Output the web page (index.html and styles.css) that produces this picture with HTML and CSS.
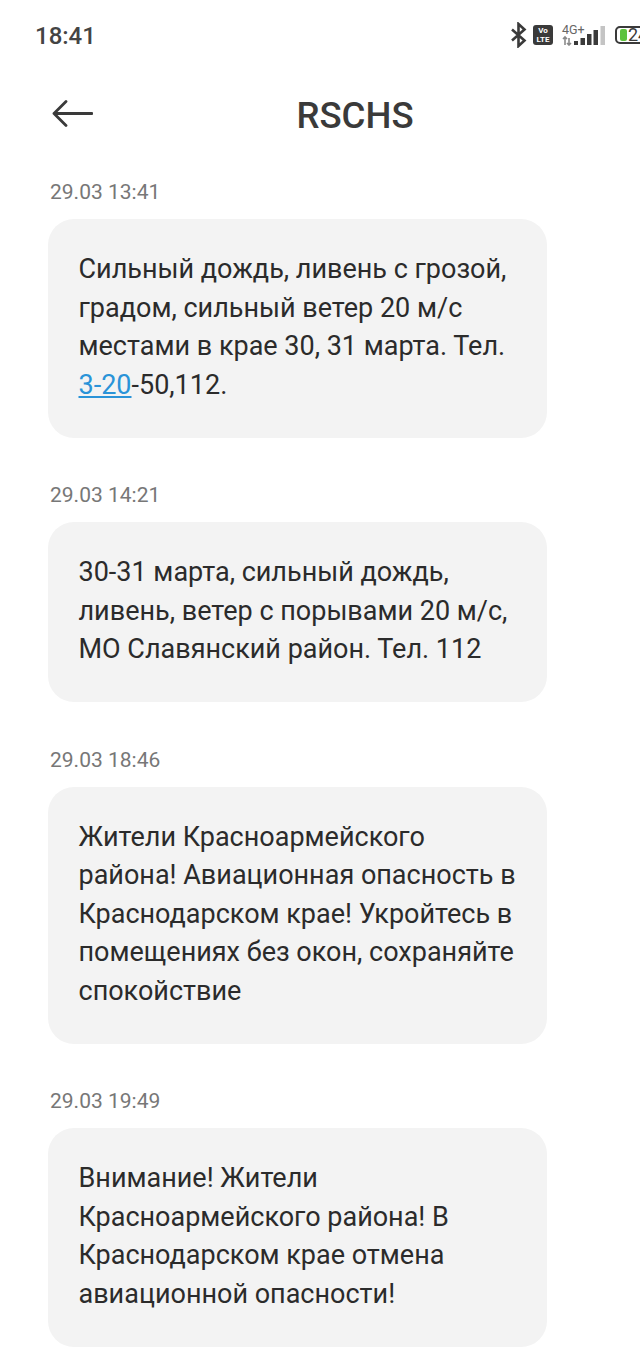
FILE: index.html
```html
<!DOCTYPE html>
<html>
<head>
    <meta charset="UTF-8">
    <meta name="viewport" content="width=device-width, initial-scale=1.0">
    <title>RSCHS</title>
    <link rel="stylesheet" href="styles.css">
</head>
<body>
    <div class="statusBar">
        <span class="clock">18:41</span>
        <div class="statusIcons">
            <svg class="bt" width="17" height="26" viewBox="0 0 17 26">
                <path d="M2 7.500 L14.500 18.500 L8.500 24 V2 L14.500 7.500 L2 18.500" fill="none" stroke="#3a3a3a" stroke-width="2.600"/>
            </svg>
            <div class="volte"><span>Vo</span><span>LTE</span></div>
            <div class="signal">
                <span class="netType">4G+</span>
                <svg width="44" height="20" viewBox="0 0 44 20">
                    <path d="M3 11 V19 M1 13 L3 11 L5 13 M7 19 V12 M5 17 L7 19 L9 17" fill="none" stroke="#8a8a8a" stroke-width="1.600"/>
                    <rect x="12" y="15" width="4" height="4" fill="#3a3a3a"/>
                    <rect x="18.500" y="12" width="4.500" height="7" fill="#3a3a3a"/>
                    <rect x="25" y="8" width="4.500" height="11" fill="#3a3a3a"/>
                    <rect x="31.500" y="4" width="4.500" height="15" fill="#3a3a3a"/>
                    <rect x="38.500" y="0" width="4.500" height="19" fill="#c4c4c4"/>
                </svg>
            </div>
            <div class="battery"><span class="batteryFill"></span><span class="batteryNum">24</span></div>
        </div>
    </div>

    <div class="header">
        <svg class="back" width="41" height="28" viewBox="0 0 41 28">
            <path d="M14 1.500 L2 13.500 L14 25.500 M2 13.500 H40" fill="none" stroke="#3a3a3a" stroke-width="2.800" stroke-linecap="round" stroke-linejoin="round"/>
        </svg>
        <h1>RSCHS</h1>
    </div>

    <div class="messages">
        <div class="message">
            <div class="time">29.03 13:41</div>
            <div class="bubble">Сильный дождь, ливень с грозой, градом, сильный ветер 20 м/с местами в крае 30, 31 марта. Тел. <a class="phone">3-20</a>-50,112.</div>
        </div>
        <div class="message">
            <div class="time">29.03 14:21</div>
            <div class="bubble">30-31 марта, сильный дождь, ливень, ветер с порывами 20 м/с, МО Славянский район. Тел. 112</div>
        </div>
        <div class="message">
            <div class="time">29.03 18:46</div>
            <div class="bubble">Жители Красноармейского района! Авиационная опасность в Краснодарском крае! Укройтесь в помещениях без окон, сохраняйте спокойствие</div>
        </div>
        <div class="message">
            <div class="time">29.03 19:49</div>
            <div class="bubble">Внимание! Жители Красноармейского района! В Краснодарском крае отмена авиационной опасности!</div>
        </div>
    </div>
</body>
</html>
```

FILE: styles.css
```css
body {
    margin: 0;
    width: 640px;
    height: 1362px;
    overflow: hidden;
    background-color: #fff;
    font-family: Roboto, sans-serif;
    color: #2b2b2b;
}

.statusBar {
    height: 72px;
    padding-left: 35px;
    display: flex;
    justify-content: space-between;
    align-items: center;
    overflow: hidden;
}

.clock {
    font-size: 24px;
    font-weight: 500;
    color: #444;
}

.statusIcons {
    display: flex;
    align-items: center;
    flex-shrink: 0;
    width: 130px;
    margin-bottom: 2px;
    column-gap: 6px;
}

.bt {
    flex-shrink: 0;
}

.volte {
    width: 20px;
    height: 20px;
    flex-shrink: 0;
    border-radius: 3px;
    background-color: #3a3a3a;
    color: #fff;
    font-size: 8px;
    font-weight: 700;
    line-height: 9px;
    display: flex;
    flex-direction: column;
    align-items: center;
    justify-content: center;
}

.signal {
    display: flex;
    flex-direction: column;
    width: 44px;
    margin-left: 3px;
    flex-shrink: 0;
}

.netType {
    font-size: 12.500px;
    line-height: 10px;
    color: #666;
}

.signal svg {
    margin-top: -9px;
}

.battery {
    width: 40px;
    height: 18px;
    flex-shrink: 0;
    box-sizing: border-box;
    margin-left: 3px;
    border: 2px solid #3a3a3a;
    border-radius: 5px;
    display: flex;
    align-items: center;
    padding-left: 3px;
    column-gap: 1px;
    overflow: hidden;
}

.batteryFill {
    width: 7px;
    height: 12px;
    border-radius: 2px;
    flex-shrink: 0;
    background-color: #5ec23e;
}

.batteryNum {
    font-size: 18px;
    line-height: 14px;
    color: #3a3a3a;
}

.header {
    height: 84px;
    box-sizing: border-box;
    padding: 2px 0 0 70px;
    display: flex;
    justify-content: center;
    align-items: center;
    position: relative;
}

.back {
    position: absolute;
    left: 52px;
    top: 28px;
}

h1 {
    margin: 0;
    font-size: 36.600px;
    font-weight: 500;
    color: #3a3a3a;
}

.messages {
    display: flex;
    flex-direction: column;
    row-gap: 45.500px;
    padding: 24px 93px 0 48px;
}

.time {
    margin: 0 0 15px 2px;
    font-size: 21px;
    line-height: 24px;
    color: #777;
}

.bubble {
    width: 499px;
    box-sizing: border-box;
    padding: 31px 30px 33.500px 30.500px;
    border-radius: 26px;
    background-color: #f3f3f3;
    font-size: 27px;
    line-height: 38.500px;
    color: #2b2b2b;
}

.phone {
    color: #2a93d8;
    text-decoration: underline;
}
```
